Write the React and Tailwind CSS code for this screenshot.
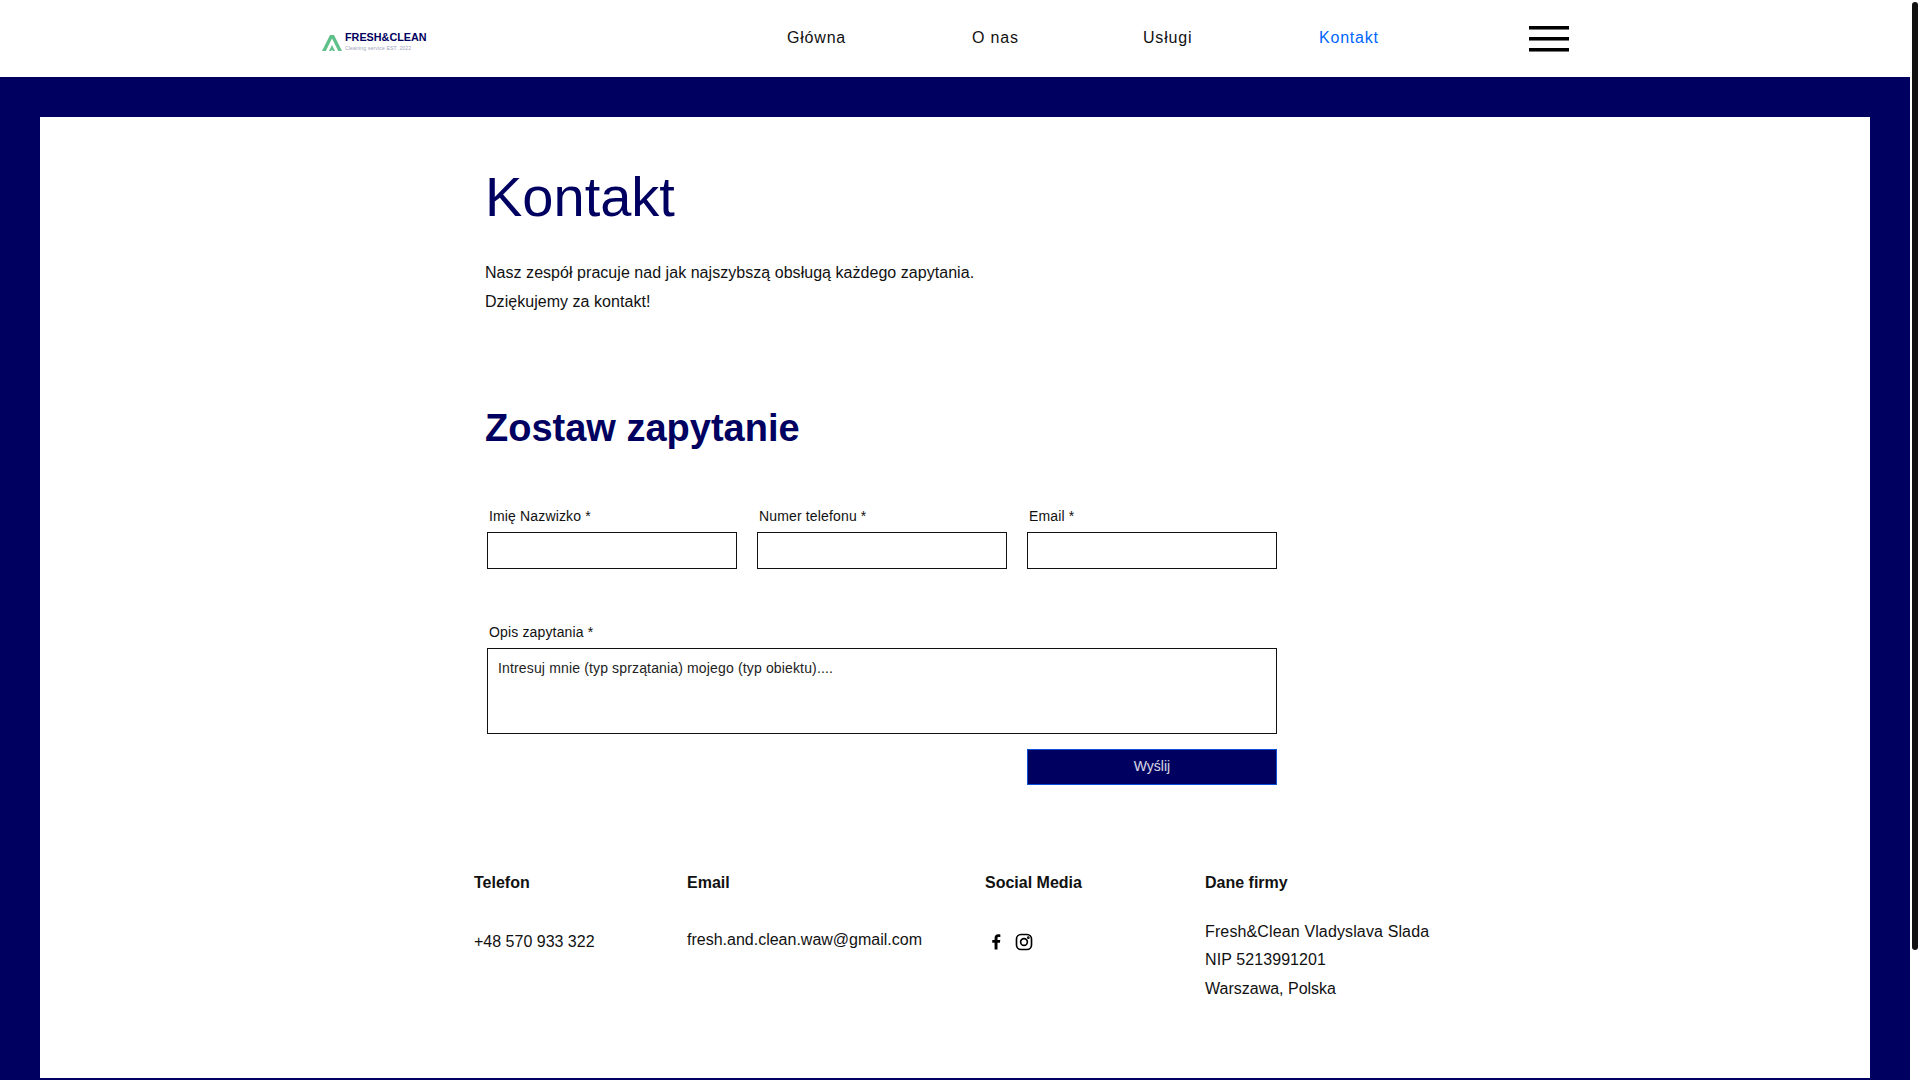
import { useState } from 'react';

const NAVY = 'text-[#000060]';
const navItems = [
    { label: 'Główna', width: 'w-[185px]' },
    { label: 'O nas', width: 'w-[171px]' },
    { label: 'Usługi', width: 'w-[176px]' },
    { label: 'Kontakt', width: 'w-[210px]', active: true },
];

const Logo = () => (
    <div className="flex items-center gap-[3px] w-[465px] pt-[9px]">
        <svg width="20" height="16" viewBox="0 0 20 16" className="mt-[1px]">
            <path d="M0 16 L8 0 H12 L20 16 H16.300 L10 3.600 L3.800 16 Z" fill="#5fc08a" />
            <path d="M7 16 L10 10 L13 16 H10.800 L10 14.400 L9.200 16 Z" fill="#5fc08a" />
        </svg>
        <div className="flex flex-col">
            <span className={`text-[10.8px] leading-[11px] font-bold ${NAVY}`}>FRESH&amp;CLEAN</span>
            <span className="text-[5.2px] leading-[7px] mt-[2px] text-[#a0a4b8] tracking-[0.1px]">Cleaning service EST. 2022</span>
        </div>
    </div>
);

const Header = () => (
    <header className="h-[77px] bg-white flex items-start pl-[322px]">
        <div className="flex items-center h-[75px]">
            <Logo />
            <nav className="flex items-center">
                {navItems.map(item => (
                    <a
                        key={item.label}
                        className={`${item.width} text-[16px] tracking-[0.8px] ${item.active ? 'text-[#0066ff]' : 'text-[#111111]'}`}
                    >
                        {item.label}
                    </a>
                ))}
            </nav>
            <div className="flex flex-col gap-[7px] w-[40px] mt-[2px]">
                <span className="h-[4px] bg-black border-b border-[#777777]" />
                <span className="h-[4px] bg-black border-b border-[#777777]" />
                <span className="h-[4px] bg-black border-b border-[#777777]" />
            </div>
        </div>
    </header>
);

const Field = ({ label, width = 'w-[250px]' }) => (
    <label className={`flex flex-col ${width}`}>
        <span className="text-[14px] tracking-[0.15px] leading-[16px] text-[#111111] pl-[2px] mb-[8px]">{label}</span>
        <input className="h-[37px] border border-[#111111] bg-white outline-none" />
    </label>
);

const ContactForm = () => {
    const [message, setMessage] = useState('');

    return (
        <form className="flex flex-col w-[790px] ml-[2px] mt-[57px]">
            <div className="flex gap-[20px]">
                <Field label="Imię Nazwizko *" />
                <Field label="Numer telefonu *" />
                <Field label="Email *" />
            </div>
            <label className="flex flex-col mt-[55px]">
                <span className="text-[14px] tracking-[0.15px] leading-[16px] text-[#111111] pl-[2px] mb-[8px]">Opis zapytania *</span>
                <textarea
                    value={message}
                    onChange={e => setMessage(e.target.value)}
                    placeholder="Intresuj mnie (typ sprzątania) mojego (typ obiektu)...."
                    className="h-[86px] border border-[#111111] bg-white px-[10px] py-[9px] text-[14px] tracking-[0.15px] leading-[20px] text-[#111111] placeholder:text-[#222222] outline-none resize-none"
                />
            </label>
            <div className="flex justify-end mt-[15px]">
                <button
                    type="button"
                    className="w-[250px] h-[36px] bg-[#000060] border border-[#0b4fd8] text-[14px] text-white/85"
                >
                    Wyślij
                </button>
            </div>
        </form>
    );
};

const FooterInfo = () => (
    <div className="flex mt-[89px] -ml-[11px] text-[16px] text-[#111111]">
        <div className="w-[213px]">
            <h3 className="font-bold leading-[18px]">Telefon</h3>
            <p className="mt-[41px] leading-[18px]">+48 570 933 322</p>
        </div>
        <div className="w-[298px]">
            <h3 className="font-bold leading-[18px]">Email</h3>
            <p className="mt-[39px] leading-[18px]">fresh.and.clean.waw@gmail.com</p>
        </div>
        <div className="w-[220px]">
            <h3 className="font-bold leading-[18px]">Social Media</h3>
            <div className="flex items-center gap-[10px] mt-[41px] pl-[2px]">
                <svg width="18" height="18" viewBox="0 0 24 24" fill="#000000">
                    <path d="M14 22v-9h3.200l.5-3.700H14V7c0-1.100.3-1.800 1.800-1.800h2V1.900c-.4 0-1.500-.2-2.900-.2-2.900 0-4.800 1.800-4.800 5v2.600H7V13h3.100v9z" />
                </svg>
                <svg width="18" height="18" viewBox="0 0 24 24" fill="none" stroke="#000000" strokeWidth="2.200">
                    <rect x="2" y="2" width="20" height="20" rx="6" />
                    <circle cx="12" cy="12" r="4.500" />
                    <circle cx="17.800" cy="6.200" r="0.700" fill="#000000" />
                </svg>
            </div>
        </div>
        <div>
            <h3 className="font-bold leading-[18px]">Dane firmy</h3>
            <div className="mt-[26px] leading-[28.8px]">
                <p className="tracking-[0.13px]">Fresh&amp;Clean Vladyslava Slada</p>
                <p className="tracking-[0.09px]">NIP 5213991201</p>
                <p>Warszawa, Polska</p>
            </div>
        </div>
    </div>
);

export default function App() {
    return (
        <div className="flex h-[1080px] overflow-hidden bg-white font-['Liberation_Sans',Arial,sans-serif]">
            <div className="flex flex-col w-[1910px]">
                <Header />
                <div className="flex-1 bg-[#000060] pt-[40px] px-[40px] pb-[2px] flex">
                    <main className="flex-1 bg-white pl-[445px]">
                        <h1 className={`text-[56px] leading-[64px] mt-[48px] ${NAVY}`}>Kontakt</h1>
                        <div className="mt-[30px] text-[16px] tracking-[0.04px] leading-[28.8px] text-[#111111]">
                            <p>Nasz zespół pracuje nad jak najszybszą obsługą każdego zapytania.</p>
                            <p>Dziękujemy za kontakt!</p>
                        </div>
                        <h2 className={`text-[38px] leading-[46px] font-bold mt-[88px] ${NAVY}`}>Zostaw zapytanie</h2>
                        <ContactForm />
                        <FooterInfo />
                    </main>
                </div>
            </div>
            <div className="w-[10px] pt-[2px] pl-[2px] pr-[2px]">
                <div className="h-[948px] rounded-full bg-[#111111]" />
            </div>
        </div>
    );
}
